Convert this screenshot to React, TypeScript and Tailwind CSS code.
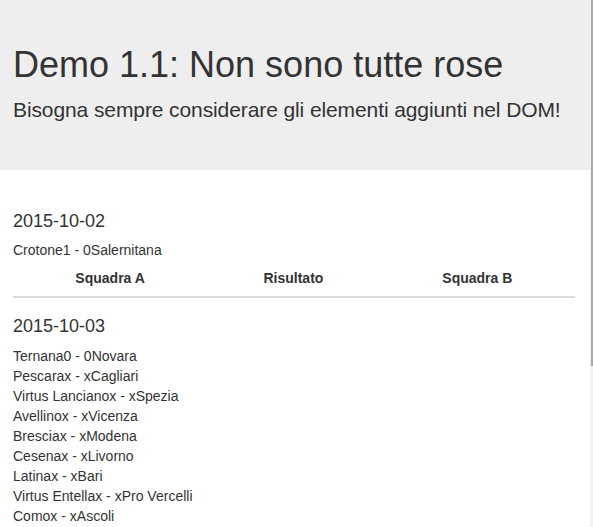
import React from "react";

const giornate = [
  {
    data: "2015-10-02",
    partite: [{ a: "Crotone", ra: "1", rb: "0", b: "Salernitana" }],
    tabella: true,
  },
  {
    data: "2015-10-03",
    partite: [
      { a: "Ternana", ra: "0", rb: "0", b: "Novara" },
      { a: "Pescara", ra: "x", rb: "x", b: "Cagliari" },
      { a: "Virtus Lanciano", ra: "x", rb: "x", b: "Spezia" },
      { a: "Avellino", ra: "x", rb: "x", b: "Vicenza" },
      { a: "Brescia", ra: "x", rb: "x", b: "Modena" },
      { a: "Cesena", ra: "x", rb: "x", b: "Livorno" },
      { a: "Latina", ra: "x", rb: "x", b: "Bari" },
      { a: "Virtus Entella", ra: "x", rb: "x", b: "Pro Vercelli" },
      { a: "Como", ra: "x", rb: "x", b: "Ascoli" },
    ],
    tabella: false,
  },
];

export default function App() {
  return (
    <div className="flex h-[527px] overflow-hidden bg-white text-[14px] leading-[20px] text-[#333] font-['Liberation_Sans',Arial,sans-serif]">
      <div className="flex-1 min-w-0">
        {/* Jumbotron */}
        <div className="bg-[#eee] pl-[13px] pr-[15px] pt-[45px] pb-[30px]">
          <h1 className="text-[36px] leading-[1.1] font-medium">Demo 1.1: Non sono tutte rose</h1>
          <p className="mt-[10px] mb-[15px] text-[21px] leading-[30px] font-light tracking-[-0.1px]">
            Bisogna sempre considerare gli elementi aggiunti nel DOM!
          </p>
        </div>

        {/* Partite */}
        <div className="pl-[13px] pr-[15px] pt-[41px]">
          {giornate.map((g, i) => (
            <div key={g.data} className={i > 0 ? "mt-[18px]" : ""}>
              <h4 className="pt-[1px] mb-[9px] text-[18px] leading-[1.1] font-medium">{g.data}</h4>
              {g.partite.map((p) => (
                <div key={p.a}>
                  {p.a}
                  {p.ra} - {p.rb}
                  {p.b}
                </div>
              ))}
              {g.tabella && (
                <table className="w-full border-collapse">
                  <thead>
                    <tr>
                      <th className="p-[8px] text-center font-bold border-b-2 border-[#ddd]">Squadra A</th>
                      <th className="p-[8px] text-center font-bold border-b-2 border-[#ddd]">Risultato</th>
                      <th className="p-[8px] text-center font-bold border-b-2 border-[#ddd]">Squadra B</th>
                    </tr>
                  </thead>
                  <tbody></tbody>
                </table>
              )}
            </div>
          ))}
        </div>
      </div>

      {/* scrollbar */}
      <div className="w-[3px] bg-[#f1f1f1] flex justify-end">
        <div className="w-[2px] h-[366px] bg-[#a9a9a9]"></div>
      </div>
    </div>
  );
}
